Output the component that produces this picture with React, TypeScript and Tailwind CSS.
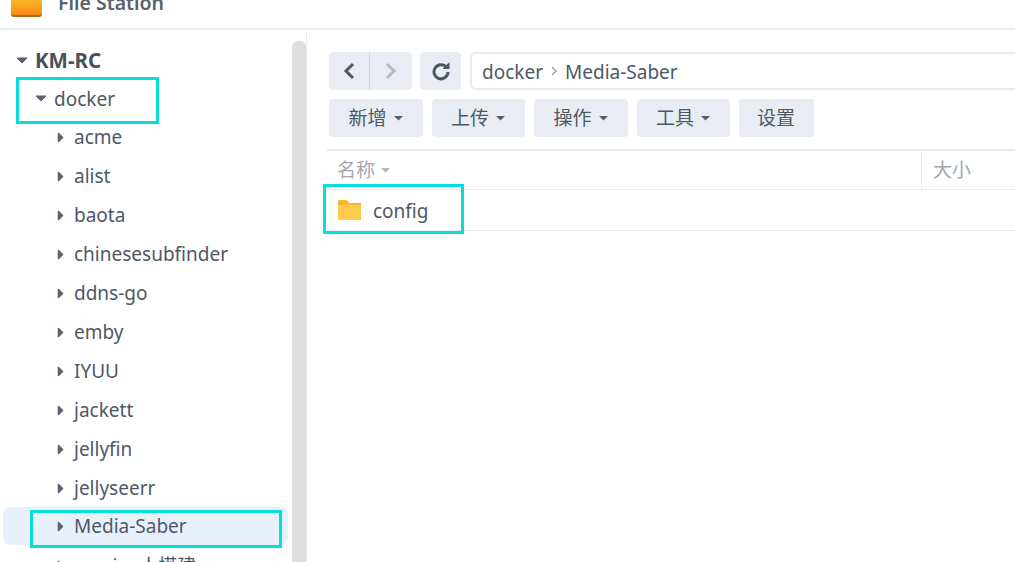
import React from "react";

const items = ["acme","alist","baota","chinesesubfinder","ddns-go","emby","IYUU","jackett","jellyfin","jellyseerr"];

function Right({ c = "#5b6470" }: { c?: string }) {
  return (
    <svg width="7" height="13" viewBox="0 0 7 13" className="shrink-0">
      <path d="M1.5 2.5 L5.5 6.5 L1.5 10.5 Z" fill={c} stroke={c} strokeWidth="1.6" strokeLinejoin="round" />
    </svg>
  );
}
function Down() {
  return (
    <svg width="12" height="7" viewBox="0 0 12 7" className="shrink-0">
      <path d="M1 1 L11 1 L6 6 Z" fill="#5b6470" stroke="#5b6470" strokeWidth="1" strokeLinejoin="round" />
    </svg>
  );
}
function Caret() {
  return (
    <svg width="9" height="5" viewBox="0 0 9 5" className="shrink-0">
      <path d="M0 0 L9 0 L4.5 4.5 Z" fill="#55606c" />
    </svg>
  );
}
function Btn({ label, w, caret = true }: { label: string; w: string; caret?: boolean }) {
  return (
    <div className={`${w} h-[38px] rounded-[4px] bg-[#e9edf3] flex items-center justify-center gap-[7px] pr-[1px] text-[19px] text-[#4e5865]`}>
      <span>{label}</span>
      {caret && <Caret />}
    </div>
  );
}

export default function App() {
  return (
    <div className="relative w-[1015px] h-[562px] overflow-hidden bg-white text-[#4e5865] font-['Noto_Sans','Noto_Sans_CJK_SC',sans-serif]">
      {/* title bar */}
      <div className="h-[30px] border-b-2 border-[#e8edf3] flex items-end pb-[11px] pl-[11px] gap-[16px] overflow-hidden">
        <div className="w-[31px] h-[24px] shrink-0 rounded-b-[3px] bg-gradient-to-b from-[#fdc92f] to-[#f78a12] border-b-2 border-[#a86a1c]" />
        <div className="text-[19.5px] font-semibold leading-[26px] text-[#5a626d] -translate-y-[2px] -mb-[1px]">File Station</div>
      </div>
      <div className="flex h-[532px]">
        {/* sidebar */}
        <div className="relative w-[307px] shrink-0 border-r border-[#e8edf3] flex">
          <div className="w-[292px] shrink-0 pt-[11px] pl-[3px]">
            <div className="h-[38.5px] flex items-center pl-[13px] gap-[7px] text-[20.5px] font-bold text-[#47505c]">
              <Down />
              <span>KM-RC</span>
            </div>
            <div className="h-[38.6px] flex items-center pl-[32px] gap-[7px] text-[19px]">
              <Down />
              <span>docker</span>
            </div>
            {items.map((t) => (
              <div key={t} className="h-[38.95px] flex items-center pl-[54px] gap-[10px] text-[19px]">
                <Right />
                <span>{t}</span>
              </div>
            ))}
            <div className="h-[38px] mr-[4px] rounded-[8px] bg-[#e6f1fc] flex items-center pl-[54px] gap-[10px] text-[19px]">
              <Right />
              <span>Media-Saber</span>
            </div>
            <div className="h-[39px] mt-[1px] flex items-center pl-[54px] gap-[10px] text-[19px]">
              <Right />
              <span>movie- 人搭建</span>
            </div>
          </div>
          <div className="mt-[11px] w-[11px] flex-1 rounded-t-[6px] bg-[#dedede]" />
        </div>
        {/* main */}
        <div className="flex-1 min-w-0">
          <div className="pl-[22px] pt-[22px] flex gap-[8px]">
            <div className="flex h-[38px] w-[83px] rounded-[4px] bg-[#e9edf3]">
              <div className="w-[41px] border-r border-[#cfd6de] flex items-center justify-center">
                <svg width="14" height="20" viewBox="0 0 14 20"><path d="M11 3 L4 10 L11 17" fill="none" stroke="#4e5865" strokeWidth="3" /></svg>
              </div>
              <div className="flex-1 flex items-center justify-center">
                <svg width="14" height="20" viewBox="0 0 14 20"><path d="M3 3 L10 10 L3 17" fill="none" stroke="#b4bac2" strokeWidth="3" /></svg>
              </div>
            </div>
            <div className="h-[38px] w-[41px] rounded-[4px] bg-[#e9edf3] flex items-center justify-center">
              <svg width="20" height="20" viewBox="0 0 20 20">
                <path d="M15.5 6.5 A7 7 0 1 0 17 11" fill="none" stroke="#4e5865" strokeWidth="3" />
                <path d="M11.5 8 L18.5 8 L18.5 1 Z" fill="#4e5865" />
              </svg>
            </div>
            <div className="flex-1 ml-[1px] h-[38px] rounded-l-[6px] border-2 border-r-0 border-[#e6ebf2] flex items-center pl-[10px] text-[19px] -mr-[2px]">
              <span className="translate-y-[1px]">docker</span>
              <svg width="8" height="12" viewBox="0 0 8 12" className="mx-[7px]"><path d="M2 2 L6 6 L2 10" fill="none" stroke="#98a0aa" strokeWidth="1.4" /></svg>
              <span className="translate-y-[1px]">Media-Saber</span>
            </div>
          </div>
          <div className="pl-[22px] pt-[9px] flex gap-[9px]">
            <Btn label="新增" w="w-[94px]" />
            <Btn label="上传" w="w-[93px]" />
            <Btn label="操作" w="w-[94px]" />
            <Btn label="工具" w="w-[93px]" />
            <Btn label="设置" w="w-[75px]" caret={false} />
          </div>
          <div className="ml-[20px] mt-[12px] h-[41px] border-t-2 border-b border-t-[#e6ebf2] border-b-[#e8edf3] flex text-[19px] text-[#a3a8ae]">
            <div className="w-[595px] border-r border-[#e8edf3] flex items-center pl-[10px] gap-[6px] shrink-0">
              <span>名称</span>
              <svg width="9" height="5" viewBox="0 0 9 5"><path d="M0 0 L9 0 L4.5 4.5 Z" fill="#b0b5bb" /></svg>
            </div>
            <div className="flex items-center pl-[11px]">大小</div>
          </div>
          <div className="ml-[20px] h-[41px] border-b border-[#e8edf3] flex items-center pl-[11px] gap-[12px] text-[19px]">
            <svg width="23" height="20" viewBox="0 0 23 20" className="shrink-0">
              <path d="M0 2 Q0 0 2 0 L8.5 0 L11 3 L23 3 L23 20 L0 20 Z" fill="#ffcb4f" />
              <path d="M0 2 Q0 0 2 0 L8.5 0 L11 3 L23 3 L23 5 L0 5 Z" fill="#f9b52c" />
            </svg>
            <span className="translate-y-[1px]">config</span>
          </div>
        </div>
      </div>
      {/* annotation boxes */}
      <div className="absolute left-[16px] top-[77px] w-[143px] h-[47px] border-[3px] border-[#06dede]" />
      <div className="absolute left-[30px] top-[510px] w-[252px] h-[38px] border-[3px] border-[#06dede]" />
      <div className="absolute left-[323px] top-[184px] w-[141px] h-[50px] border-[3px] border-[#06dede]" />
    </div>
  );
}
